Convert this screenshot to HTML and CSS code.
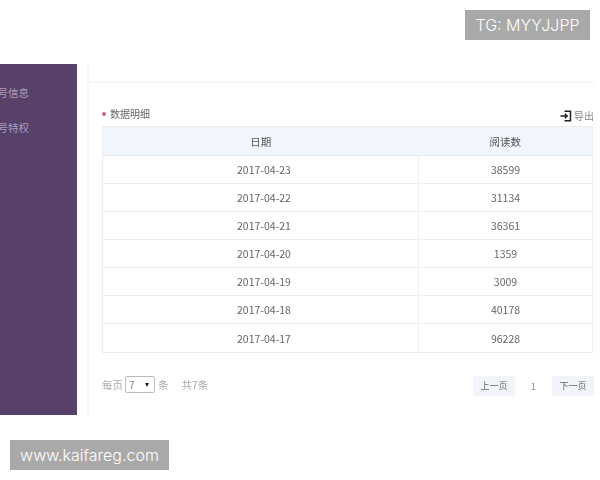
FILE: index.html
```html
<!DOCTYPE html>
<html lang="zh-CN">
<head>
<meta charset="utf-8">
<title>数据明细</title>
<link rel="stylesheet" href="styles.css">
</head>
<body>
<div class="watermark watermark-top">TG: MYYJJPP</div>
<div class="shell">
  <aside class="sidebar">
    <a class="nav-item">帐号信息</a>
    <a class="nav-item">帐号特权</a>
  </aside>
  <main class="main">
    <div class="topbar"></div>
    <section class="content">
      <div class="section-head">
        <h2 class="section-title"><span class="dot"></span>数据明细</h2>
        <a class="export">
          <svg class="export-icon" width="12" height="12" viewBox="0 0 12 12" aria-hidden="true">
            <path d="M4.5 1.2H10.5V10.8H4.5M0.5 6H7M4.8 3.8L7.2 6L4.8 8.2" fill="none" stroke="#222" stroke-width="1.5"/>
          </svg>导出
        </a>
      </div>
      <table class="data-table">
        <thead>
          <tr><th class="col-date">日期</th><th>阅读数</th></tr>
        </thead>
        <tbody>
          <tr><td class="date">2017-04-23</td><td>38599</td></tr>
          <tr><td class="date">2017-04-22</td><td>31134</td></tr>
          <tr><td class="date">2017-04-21</td><td>36361</td></tr>
          <tr><td class="date">2017-04-20</td><td>1359</td></tr>
          <tr><td class="date">2017-04-19</td><td>3009</td></tr>
          <tr><td class="date">2017-04-18</td><td>40178</td></tr>
          <tr><td class="date">2017-04-17</td><td>96228</td></tr>
        </tbody>
      </table>
      <div class="pager">
        <div class="pager-info">
          <span>每页</span>
          <span class="select">7<span class="arrow"></span></span>
          <span>条</span>
          <span class="total">共7条</span>
        </div>
        <div class="pager-nav">
          <a class="page-btn">上一页</a>
          <span class="page-num">1</span>
          <a class="page-btn">下一页</a>
        </div>
      </div>
    </section>
  </main>
</div>
<div class="watermark watermark-bottom">www.kaifareg.com</div>
</body>
</html>
```

FILE: styles.css
```css
* { box-sizing: border-box; }
html, body { margin: 0; padding: 0; }
body {
  width: 600px;
  height: 480px;
  overflow: hidden;
  background: #fff;
  position: relative;
  font-family: "Noto Sans CJK SC", "Liberation Sans", sans-serif;
  font-size: 10.5px;
  color: #555;
}
.watermark {
  position: absolute;
  height: 30px;
  line-height: 30px;
  background: #a9a9a9;
  color: #fff;
  font-family: "Inter", "Liberation Sans", sans-serif;
  font-weight: 300;
  font-size: 16px;
  text-align: center;
  z-index: 2;
}
.watermark-top { left: 465px; top: 10px; width: 125px; }
.watermark-bottom { left: 10px; top: 440px; width: 159px; }

.shell {
  display: flex;
  margin-top: 64px;
  height: 351px;
  position: absolute;
  top: 0;
  left: 0;
  width: 594px;
  filter: blur(0.35px);
}
.sidebar {
  width: 77px;
  flex: none;
  background: #574169;
  overflow: hidden;
  padding-top: 21px;
  display: flex;
  flex-direction: column;
  gap: 19px;
}
.nav-item {
  display: block;
  margin-left: -13px;
  width: 48px;
  height: 16px;
  line-height: 16px;
  white-space: nowrap;
  color: #ab9bb9;
  font-size: 10.5px;
}
.main {
  margin-left: 10px;
  flex: 1;
  border-left: 2px solid #f6f6f6;
  display: flex;
  flex-direction: column;
}
.topbar {
  height: 19px;
  flex: none;
  border-bottom: 2px solid #f6f6f6;
}
.content {
  padding: 0 0 0 13px;
  flex: 1;
}
.section-head {
  height: 43px;
  display: flex;
  justify-content: space-between;
  align-items: flex-end;
  padding-bottom: 4px;
}
.section-title {
  margin: 0;
  font-weight: normal;
  font-size: 10px;
  line-height: 16px;
  color: #666;
  display: flex;
  align-items: center;
}
.dot {
  width: 4px;
  height: 4px;
  border-radius: 50%;
  background: #c0688a;
  margin-right: 4px;
}
.export {
  display: flex;
  align-items: center;
  color: #888;
  line-height: 14px;
  font-size: 10px;
  gap: 2px;
  margin-bottom: -1px;
}
.data-table {
  width: 491px;
  border-collapse: collapse;
  table-layout: fixed;
  border: 1px solid #eee;
}
.data-table th {
  height: 29px;
  padding: 0;
  font-weight: normal;
  font-size: 10.5px;
  color: #555;
  background: #f1f6fc;
  border-bottom: 1px solid #e6ebf1;
}
.col-date { width: 316px; }
.data-table td {
  height: 28px;
  padding: 0;
  text-align: center;
  border: 1px solid #eee;
  color: #666;
}
.data-table tr:last-child td { height: 29px; }
.data-table td.date { padding-left: 7px; }
.pager {
  margin-top: 22px;
  display: flex;
  justify-content: space-between;
  align-items: center;
  height: 21px;
}
.pager-info {
  display: flex;
  align-items: center;
  color: #aaa;
  gap: 2px;
  margin-top: -2px;
}
.select {
  width: 30px;
  height: 17px;
  border: 1px solid #bbb;
  border-radius: 2px;
  color: #888;
  line-height: 15px;
  padding-left: 3px;
  position: relative;
  margin-right: 1px;
}
.arrow {
  position: absolute;
  right: 5px;
  top: 6px;
  border-left: 2.5px solid transparent;
  border-right: 2.5px solid transparent;
  border-top: 4px solid #222;
}
.total { margin-left: 11px; }
.pager-nav {
  display: flex;
  align-items: center;
}
.page-btn {
  width: 42px;
  height: 20px;
  line-height: 20px;
  font-size: 9px;
  background: #f1f5fa;
  color: #666;
  text-align: center;
}
.page-num {
  width: 37px;
  text-align: center;
  color: #a88;
  font-size: 9.5px;
}
```
